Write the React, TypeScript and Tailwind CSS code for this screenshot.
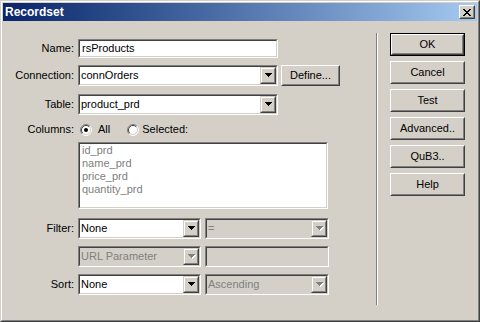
import type { ReactNode } from "react";

const raisedOuter =
  "border border-t-white border-l-white border-r-[#404040] border-b-[#404040]";
const raisedInner =
  "border border-t-[#d4d0c8] border-l-[#d4d0c8] border-r-[#808080] border-b-[#808080]";
const sunkOuter =
  "border border-t-[#808080] border-l-[#808080] border-r-white border-b-white";
const sunkInner =
  "border border-t-[#404040] border-l-[#404040] border-r-[#d4d0c8] border-b-[#d4d0c8]";

function Arrow({ disabled = false }: { disabled?: boolean }) {
  const tri = (fill: string, dx: number, dy: number) => (
    <g fill={fill}>
      <rect x={dx} y={dy} width={7} height={1} />
      <rect x={1 + dx} y={1 + dy} width={5} height={1} />
      <rect x={2 + dx} y={2 + dy} width={3} height={1} />
      <rect x={3 + dx} y={3 + dy} width={1} height={1} />
    </g>
  );
  return (
    <svg width="8" height="5" shapeRendering="crispEdges" className="ml-px">
      {disabled ? (
        <>
          {tri("#ffffff", 1, 1)}
          {tri("#808080", 0, 0)}
        </>
      ) : (
        tri("#000000", 0, 0)
      )}
    </svg>
  );
}

function Combo({
  value,
  className,
  disabled = false,
}: {
  value: string;
  className: string;
  disabled?: boolean;
}) {
  return (
    <div className={`flex h-[21px] ${sunkOuter} ${className}`}>
      <div
        className={`flex flex-1 ${sunkInner} ${disabled ? "bg-[#d4d0c8] text-[#808080]" : "bg-white text-black"}`}
      >
        <span className="flex-1 pl-px leading-[17px] truncate">{value}</span>
        <div className="w-[16px] h-[17px] border border-t-[#d4d0c8] border-l-[#d4d0c8] border-r-[#404040] border-b-[#404040]">
          <div className="h-full flex items-center justify-center border border-t-white border-l-white border-r-[#808080] border-b-[#808080] bg-[#d4d0c8]">
            <Arrow disabled={disabled} />
          </div>
        </div>
      </div>
    </div>
  );
}

function TextBox({
  value,
  className,
  disabled = false,
}: {
  value: string;
  className: string;
  disabled?: boolean;
}) {
  return (
    <div className={`${sunkOuter} ${className}`}>
      <div
        className={`h-full pl-[2px] flex items-center ${sunkInner} ${disabled ? "bg-[#d4d0c8]" : "bg-white"}`}
      >
        {value}
      </div>
    </div>
  );
}

function Button({
  label,
  isDefault = false,
  className = "w-[75px] h-[23px]",
}: {
  label: string;
  isDefault?: boolean;
  className?: string;
}) {
  const face = (
    <div className={`h-full ${raisedOuter}`}>
      <div className={`h-full flex items-center justify-center ${raisedInner}`}>
        {label}
      </div>
    </div>
  );
  if (isDefault)
    return <div className={`border border-black ${className}`}>{face}</div>;
  return <div className={className}>{face}</div>;
}

function Radio({ checked = false }: { checked?: boolean }) {
  return (
    <svg width="12" height="12" viewBox="0 0 12 12">
      <circle cx="6" cy="6" r="5" fill="#ffffff" />
      <path d="M2.1 9.9 A5.5 5.5 0 0 1 9.9 2.1" fill="none" stroke="#808080" />
      <path d="M9.9 2.1 A5.5 5.5 0 0 1 2.1 9.9" fill="none" stroke="#ffffff" />
      <path d="M2.8 9.2 A4.5 4.5 0 0 1 9.2 2.8" fill="none" stroke="#404040" />
      <path d="M9.2 2.8 A4.5 4.5 0 0 1 2.8 9.2" fill="none" stroke="#d4d0c8" />
      {checked && <circle cx="6" cy="6" r="2" fill="#000000" />}
    </svg>
  );
}

function Row({ label, children, className }: { label: string; children: ReactNode; className: string }) {
  return (
    <div className={`flex items-center ${className}`}>
      <span className="w-[71px] text-right">{label}</span>
      <div className="ml-[4px] flex items-center">{children}</div>
    </div>
  );
}

function CloseGlyph() {
  const rows = [
    [0, 2, 6, 2],
    [1, 2, 5, 2],
    [2, 4],
    [3, 2],
    [2, 4],
    [1, 2, 5, 2],
    [0, 2, 6, 2],
  ];
  return (
    <svg width="8" height="7" shapeRendering="crispEdges">
      {rows.map((r, y) => (
        <g key={y} fill="#000">
          <rect x={r[0]} y={y} width={r[1]} height={1} />
          {r.length > 2 && <rect x={r[2]} y={y} width={r[3]} height={1} />}
        </g>
      ))}
    </svg>
  );
}

export default function App() {
  const columns = ["id_prd", "name_prd", "price_prd", "quantity_prd"];
  return (
    <div className="w-[480px] h-[322px] font-['Liberation_Sans',Arial,sans-serif] text-[11px] text-black border border-t-[#d4d0c8] border-l-[#d4d0c8] border-r-[#404040] border-b-[#404040]">
      <div className="h-full bg-[#d4d0c8] p-px border border-t-white border-l-white border-r-[#808080] border-b-[#808080] flex flex-col">
        {/* title bar */}
        <div className="h-[18px] flex items-center bg-linear-to-r from-[#0a246a] to-[#a6caf0]">
          <span className="pl-[2px] text-white font-bold text-[12px]">Recordset</span>
          <div className="ml-auto mr-[2px] w-[16px] h-[14px]">
            <div className={`h-full ${raisedOuter}`}>
              <div className={`h-full flex items-center justify-center bg-[#d4d0c8] ${raisedInner}`}>
                <CloseGlyph />
              </div>
            </div>
          </div>
        </div>

        {/* body */}
        <div className="flex flex-1">
          <div className="w-[373px] flex flex-col">
            <Row label="Name:" className="mt-[18px] h-[19px]">
              <TextBox value="rsProducts" className="w-[200px] h-[19px]" />
            </Row>
            <Row label="Connection:" className="mt-[7px] h-[21px]">
              <Combo value="connOrders" className="w-[200px]" />
              <Button label="Define..." className="ml-[3px] w-[59px] h-[21px]" />
            </Row>
            <Row label="Table:" className="mt-[8px] h-[21px]">
              <Combo value="product_prd" className="w-[200px]" />
            </Row>
            <Row label="Columns:" className="mt-[8px] h-[13px]">
              <div className="ml-[2px] flex items-center">
                <Radio checked />
                <span className="ml-[6px]">All</span>
                <div className="ml-[17px]">
                  <Radio />
                </div>
                <span className="ml-[3px]">Selected:</span>
              </div>
            </Row>
            <div className={`ml-[75px] mt-[6px] w-[250px] h-[67px] ${sunkOuter}`}>
              <div className={`h-full bg-white pl-[2px] text-[#808080] leading-[13px] ${sunkInner}`}>
                {columns.map((c) => (
                  <div key={c}>{c}</div>
                ))}
              </div>
            </div>
            <Row label="Filter:" className="mt-[9px] h-[21px]">
              <Combo value="None" className="w-[123px]" />
              <Combo value="=" className="ml-[4px] w-[124px]" disabled />
            </Row>
            <Row label="" className="mt-[7px] h-[21px]">
              <Combo value="URL Parameter" className="w-[123px]" disabled />
              <TextBox value="" className="ml-[4px] w-[124px] h-[21px]" disabled />
            </Row>
            <Row label="Sort:" className="mt-[7px] h-[21px]">
              <Combo value="None" className="w-[123px]" />
              <Combo value="Ascending" className="ml-[4px] w-[124px]" disabled />
            </Row>
          </div>

          {/* separator */}
          <div className="mt-[12px] w-[2px] h-[272px] border-l border-r border-l-[#808080] border-r-white" />

          <div className="ml-[12px] mt-[12px] flex flex-col gap-[5px]">
            <Button label="OK" isDefault />
            <Button label="Cancel" />
            <Button label="Test" />
            <Button label="Advanced.." />
            <Button label="QuB3.." />
            <Button label="Help" />
          </div>
        </div>
      </div>
    </div>
  );
}
